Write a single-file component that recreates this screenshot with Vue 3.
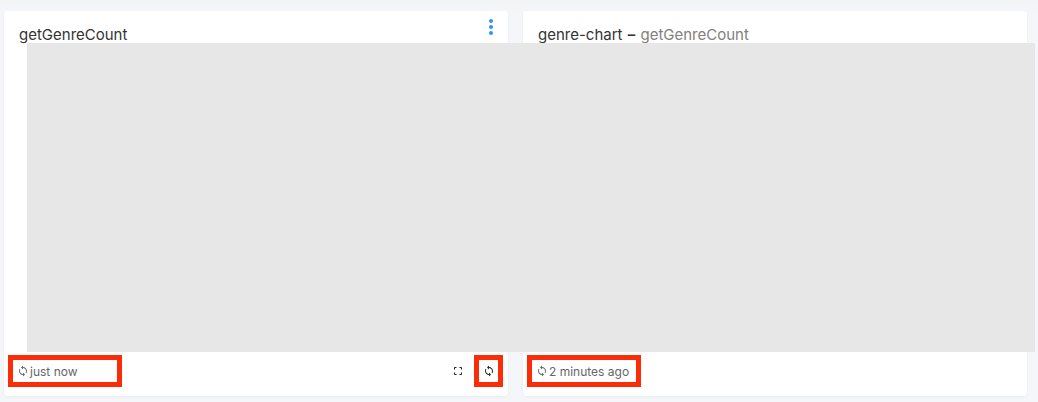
<template>
  <div class="page">
    <div class="cards">
      <section class="card">
        <header class="card-head">
          <h3 class="title">getGenreCount</h3>
          <button class="kebab" aria-label="More">
            <i></i><i></i><i></i>
          </button>
        </header>
        <div class="card-body"></div>
        <footer class="card-foot">
          <span class="mark stamp">
            <svg class="sync" viewBox="0 0 24 24"><path :d="syncPath" /></svg>
            just now
          </span>
          <span class="actions">
            <svg class="expand" viewBox="0 0 8 8">
              <path d="M.5 2.500v-2h2M5.500.5h2v2M7.500 5.500v2h-2M2.500 7.500h-2v-2" />
            </svg>
            <span class="mark reload">
              <svg class="sync dark" viewBox="0 0 24 24"><path :d="syncPath" /></svg>
            </span>
          </span>
        </footer>
      </section>

      <section class="card">
        <header class="card-head">
          <h3 class="title">genre-chart <b class="dash">–</b> <span class="sub">getGenreCount</span></h3>
        </header>
        <div class="card-body"></div>
        <footer class="card-foot">
          <span class="mark stamp">
            <svg class="sync" viewBox="0 0 24 24"><path :d="syncPath" /></svg>
            2 minutes ago
          </span>
        </footer>
      </section>

      <div class="loading"></div>
    </div>
  </div>
</template>

<script setup>
const syncPath = 'M12 4V1L8 5l4 4V6c3.310 0 6 2.690 6 6 0 1.010-.25 1.970-.7 2.800l1.460 1.460C19.540 15.030 20 13.570 20 12c0-4.420-3.580-8-8-8zm0 14c-3.310 0-6-2.690-6-6 0-1.010.25-1.970.7-2.800L5.240 7.740C4.460 8.970 4 10.430 4 12c0 4.420 3.580 8 8 8v3l4-4-4-4v3z'
</script>

<style>
html,
body {
  margin: 0;
  background: #f3f5f8;
}
</style>

<style scoped>
.page {
  width: 1038px;
  height: 402px;
  box-sizing: border-box;
  padding: 11px 11px 6px 4px;
  overflow: hidden;
  font-family: Inter, "Liberation Sans", sans-serif;
  background: linear-gradient(#f1f3f5, #f4f6f9 12px);
}

.cards {
  position: relative;
  display: grid;
  grid-template-columns: 504px 504px;
  gap: 15px;
  height: 385px;
}

.card {
  display: flex;
  flex-direction: column;
  background: #fff;
  border-radius: 4px;
  box-shadow: 0 1px 3px rgba(30, 50, 80, 0.05);
}

.card-head {
  display: flex;
  justify-content: space-between;
  height: 32px;
  padding: 0 15px;
}

.title {
  margin: 15px 0 0;
  font-size: 15px;
  line-height: 18px;
  font-weight: 400;
  color: #333;
}

.dash {
  font-weight: 600;
  margin: 0 1px;
}

.sub {
  color: #808080;
}

.kebab {
  display: flex;
  flex-direction: column;
  gap: 2px;
  margin: 8px 0 0;
  padding: 0;
  border: 0;
  background: none;
}

.kebab i {
  width: 4px;
  height: 4px;
  border-radius: 50%;
  background: #2f93f5;
}

.card-body {
  flex: 1;
}

.card-foot {
  display: flex;
  justify-content: space-between;
  align-items: center;
  height: 32px;
  padding: 0 5px 9px 4px;
}

.mark {
  display: flex;
  align-items: center;
  box-sizing: border-box;
  height: 32px;
  border: 5px solid #fb2c08;
}

.stamp {
  gap: 1px;
  padding: 0 7px 0 4px;
  font-size: 12px;
  color: #666;
  white-space: nowrap;
}

.card:first-child .stamp {
  width: 114px;
}

.reload {
  justify-content: center;
  width: 29px;
}

.actions {
  display: flex;
  align-items: center;
  gap: 12px;
}

.sync {
  width: 12px;
  height: 12px;
  fill: #666;
}

.sync.dark {
  fill: #222;
}

.expand {
  width: 8px;
  height: 8px;
  fill: none;
  stroke: #222;
  stroke-width: 1;
}

/* placeholder laid over both cards, wider than the grid */
.loading {
  position: absolute;
  top: 32px;
  left: 23px;
  width: 1008px;
  height: 309px;
  background: #e7e7e7;
}
</style>
